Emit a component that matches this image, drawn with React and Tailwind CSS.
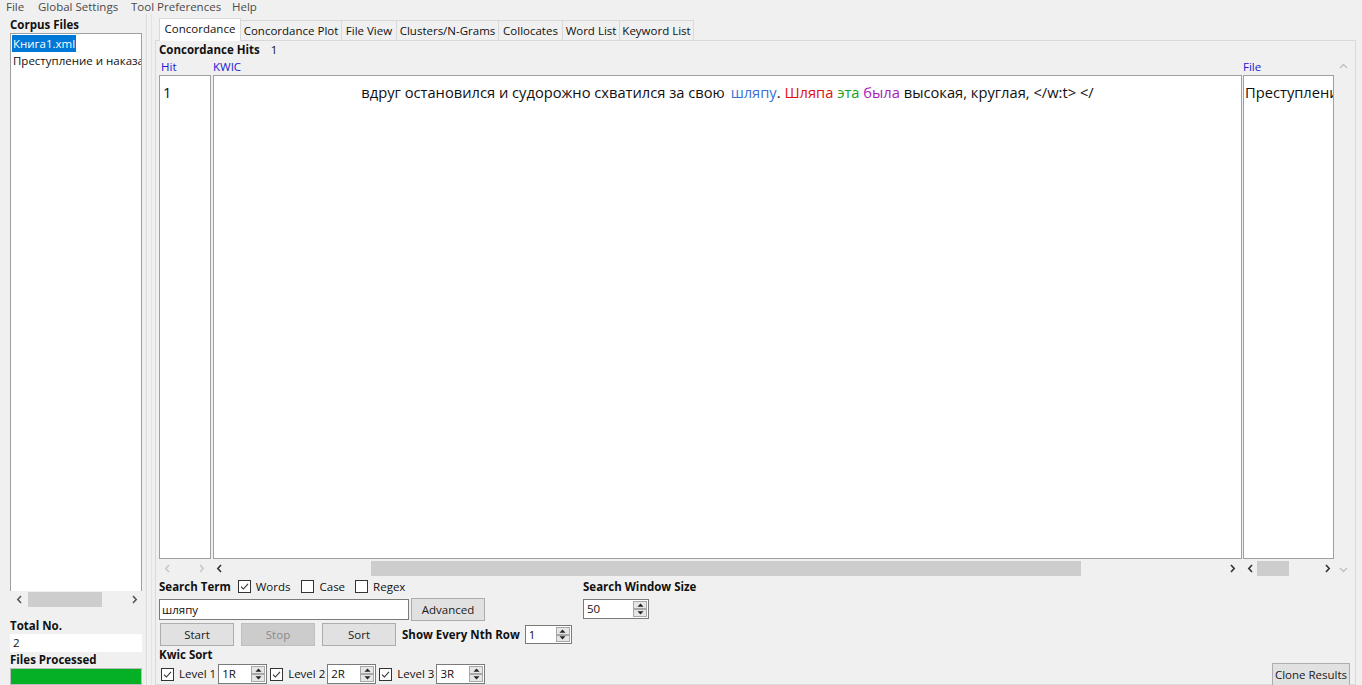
import React from "react";

const FONT = "font-['Open_Sans','Noto_Sans',sans-serif]";

function Check({ checked = true }) {
  return (
    <span className="w-[13px] h-[13px] border border-[#333333] bg-white flex items-center justify-center shrink-0">
      {checked && (
        <svg width="9" height="9" viewBox="0 0 9 9">
          <path d="M1 4.6 L3.4 7 L8 1.8" stroke="#333" strokeWidth="1.1" fill="none" />
        </svg>
      )}
    </span>
  );
}

function Tri({ up }) {
  return (
    <svg width="7" height="4" viewBox="0 0 7 4">
      {up ? <path d="M0.5 3.8 L3.5 0.5 L6.5 3.8 Z" fill="#222" /> : <path d="M0.5 0.2 L3.5 3.5 L6.5 0.2 Z" fill="#222" />}
    </svg>
  );
}

function Spin({ value, className }) {
  return (
    <div className={"flex border border-[#7a7a7a] bg-white shrink-0 " + className}>
      <div className="flex-1 pl-[3px] text-[11.5px] leading-[16px] flex items-center">{value}</div>
      <div className="w-[15px] flex flex-col justify-center gap-0 py-[1px] pr-[1px]">
        <div className="h-[8px] border border-[#a8a8a8] bg-[#e6e6e6] flex items-center justify-center">
          <Tri up />
        </div>
        <div className="h-[8px] border border-[#a8a8a8] bg-[#e6e6e6] flex items-center justify-center">
          <Tri />
        </div>
      </div>
    </div>
  );
}

function Chev({ dir, color = "#555" }) {
  return (
    <svg width="7" height="9" viewBox="0 0 7 9">
      {dir === "l" ? (
        <path d="M5 1 L1.8 4.5 L5 8" stroke={color} strokeWidth="1.6" fill="none" />
      ) : (
        <path d="M2 1 L5.2 4.5 L2 8" stroke={color} strokeWidth="1.6" fill="none" />
      )}
    </svg>
  );
}

function Btn({ children, className = "", disabled }) {
  return (
    <div
      className={
        "h-[23px] flex items-center justify-center border text-[11.5px] shrink-0 " +
        (disabled ? "bg-[#cccccc] border-[#bfbfbf] text-[#8a8a8a] " : "bg-[#e1e1e1] border-[#adadad] text-[#1a1a1a] ") +
        className
      }
    >
      {children}
    </div>
  );
}

const tabs = [
  ["Concordance Plot", "w-[101px]"],
  ["File View", "w-[55px]"],
  ["Clusters/N-Grams", "w-[102px]"],
  ["Collocates", "w-[64px]"],
  ["Word List", "w-[57px]"],
  ["Keyword List", "w-[74px]"],
];

export default function App() {
  return (
    <div className={"w-[1362px] h-[685px] bg-[#f0f0f0] overflow-hidden flex flex-col text-[#111] " + FONT}>
      {/* Menu bar */}
      <div className="h-[14px] flex items-start text-[11.5px] leading-[13px] text-[#4a4a4a] shrink-0">
        <div className="w-[38px] pl-[6px]">File</div>
        <div className="w-[93px]">Global Settings</div>
        <div className="w-[101px]">Tool Preferences</div>
        <div>Help</div>
      </div>

      <div className="flex flex-1 min-h-0">
        {/* Left panel */}
        <div className="w-[145px] pl-[10px] pr-[3px] flex flex-col shrink-0">
          <div className="h-[19px] shrink-0 text-[11.5px] font-bold leading-[16px] pt-[3px]">Corpus Files</div>
          <div className="h-[558px] shrink-0 border border-[#a0a0a0] border-b-0 bg-white flex flex-col text-[11.5px] leading-[17px] pt-[1px] pl-[1px] overflow-hidden">
            <div className="self-start bg-[#0078d7] text-white px-[1px]">Книга1.xml</div>
            <div className="whitespace-nowrap overflow-hidden px-[1px]">Преступление и наказание</div>
          </div>
          <div className="h-[17px] shrink-0 flex items-center bg-[#f0f0f0]">
            <div className="w-[18px] flex justify-center">
              <Chev dir="l" />
            </div>
            <div className="w-[74px] h-[15px] bg-[#cdcdcd]"></div>
            <div className="flex-1"></div>
            <div className="w-[16px] flex justify-center">
              <Chev dir="r" />
            </div>
          </div>
          <div className="h-[26px] shrink-0 text-[11.5px] font-bold leading-[16px] pt-[10px]">Total No.</div>
          <div className="h-[18px] shrink-0 bg-white text-[11.5px] leading-[18px] pl-[3px]">2</div>
          <div className="h-[16px] shrink-0 text-[11.5px] font-bold leading-[16px]">Files Processed</div>
          <div className="h-[17px] shrink-0 border border-[#bcbcbc] bg-[#06b025]"></div>
        </div>

        {/* Splitter */}
        <div className="w-[10px] flex shrink-0">
          <div className="w-[2px] ml-[1px] border-l border-[#dadada] bg-[#f5f5f5]"></div>
          <div className="w-[1px] ml-[3px] bg-[#e3e3e3]"></div>
        </div>

        {/* Right panel */}
        <div className="w-[1201px] flex flex-col shrink-0">
          {/* Tab bar */}
          <div className="h-[26px] flex items-end pl-[4px] text-[11.5px] shrink-0">
            <div className="w-[82px] h-[23px] bg-white border border-[#d9d9d9] border-b-0 flex items-center justify-center relative top-[1px] pb-[3px]">
              Concordance
            </div>
            {tabs.map(([t, w]) => (
              <div key={t} className={"h-[20px] border border-[#d9d9d9] border-l-0 border-b-0 bg-[#f0f0f0] flex items-center justify-center " + w}>
                {t}
              </div>
            ))}
          </div>

          {/* Pane */}
          <div className="flex-1 border border-[#d9d9d9] flex flex-col pl-[3px] pr-[3px] min-h-0">
            <div className="h-[17px] flex items-center text-[11.5px] shrink-0">
              <span className="font-bold">Concordance Hits</span>
              <span className="ml-[11px]">1</span>
            </div>

            {/* Table */}
            <div className="h-[518px] mt-[1px] flex shrink-0">
              {/* Hit col */}
              <div className="w-[52px] flex flex-col">
                <div className="h-[16px] text-[11.5px] leading-[15px] text-[#2020d0] pl-[2px]">Hit</div>
                <div className="flex-1 border border-[#a0a0a0] bg-white text-[14.7px] pl-[3px] pt-[6px] leading-[20px]">1</div>
                <div className="h-[18px] flex items-center pl-[5px] gap-[27px]">
                  <Chev dir="l" color="#c8c8c8" />
                  <Chev dir="r" color="#c8c8c8" />
                </div>
              </div>
              {/* KWIC col */}
              <div className="w-[1029px] ml-[2px] flex flex-col">
                <div className="h-[16px] text-[11.5px] leading-[15px] text-[#2020d0]">KWIC</div>
                <div className="flex-1 border border-[#a0a0a0] bg-white text-[14.7px] pt-[6px] leading-[20px] text-center whitespace-nowrap text-[#111]">
                  <span>вдруг остановился и судорожно схватился за свою </span>
                  <span className="ml-[2px] text-[#3a6fd8]">шляпу</span>
                  <span>. </span>
                  <span className="text-[#e01010]">Шляпа</span>
                  <span> </span>
                  <span className="text-[#18a018]">эта</span>
                  <span> </span>
                  <span className="text-[#a818b8]">была</span>
                  <span> высокая, круглая, &lt;/w:t&gt; &lt;/</span>
                </div>
                <div className="h-[18px] flex items-center">
                  <div className="w-[12px] flex justify-center">
                    <Chev dir="l" color="#333" />
                  </div>
                  <div className="w-[146px]"></div>
                  <div className="w-[710px] h-[15px] bg-[#cdcdcd]"></div>
                  <div className="flex-1"></div>
                  <div className="w-[20px] flex justify-center">
                    <Chev dir="r" color="#333" />
                  </div>
                </div>
              </div>
              {/* File col */}
              <div className="w-[91px] ml-[1px] flex flex-col">
                <div className="h-[16px] text-[11.5px] leading-[15px] text-[#2020d0]">File</div>
                <div className="flex-1 border border-[#a0a0a0] bg-white text-[14.7px] pl-[1px] pt-[6px] leading-[20px] whitespace-nowrap overflow-hidden">
                  Преступление
                </div>
                <div className="h-[18px] flex items-center">
                  <div className="w-[14px] flex justify-center">
                    <Chev dir="l" color="#333" />
                  </div>
                  <div className="w-[32px] h-[15px] bg-[#cdcdcd]"></div>
                  <div className="flex-1"></div>
                  <div className="w-[14px] flex justify-center">
                    <Chev dir="r" color="#333" />
                  </div>
                </div>
              </div>
              {/* Vertical scrollbar */}
              <div className="w-[17px] ml-[1px] flex flex-col items-center justify-between py-[4px]">
                <svg width="9" height="6" viewBox="0 0 9 6">
                  <path d="M1 5 L4.5 1.5 L8 5" stroke="#c0c0c0" strokeWidth="1.4" fill="none" />
                </svg>
                <svg width="9" height="6" viewBox="0 0 9 6">
                  <path d="M1 1 L4.5 4.5 L8 1" stroke="#c0c0c0" strokeWidth="1.4" fill="none" />
                </svg>
              </div>
            </div>

            {/* Controls */}
            <div className="flex-1 flex text-[11.5px] min-h-0">
              <div className="w-[424px] flex flex-col shrink-0">
                <div className="h-[17px] mt-[1px] flex items-center">
                  <span className="font-bold">Search Term</span>
                  <span className="ml-[7px]"><Check /></span>
                  <span className="ml-[5px]">Words</span>
                  <span className="ml-[10px]"><Check checked={false} /></span>
                  <span className="ml-[6px]">Case</span>
                  <span className="ml-[10px]"><Check checked={false} /></span>
                  <span className="ml-[5px]">Regex</span>
                </div>
                <div className="h-[23px] mt-[3px] flex items-center">
                  <div className="w-[250px] h-[21px] border border-[#7a7a7a] bg-white pl-[2px] flex items-center text-[11.5px]">шляпу</div>
                  <Btn className="w-[74px] ml-[2px]">Advanced</Btn>
                </div>
                <div className="h-[23px] mt-[2px] flex items-center pl-[1px]">
                  <Btn className="w-[74px]">Start</Btn>
                  <Btn className="w-[74px] ml-[7px]" disabled>Stop</Btn>
                  <Btn className="w-[74px] ml-[7px]">Sort</Btn>
                  <span className="ml-[6px] font-bold">Show Every Nth Row</span>
                  <Spin value="1" className="w-[47px] h-[19px] ml-[5px]" />
                </div>
                <div className="h-[16px] mt-[1px] font-bold leading-[16px]">Kwic Sort</div>
                <div className="h-[21px] mt-[1px] flex items-center pl-[2px]">
                  <Check />
                  <span className="ml-[5px]">Level 1</span>
                  <Spin value="1R" className="w-[49px] h-[20px] ml-[2px]" />
                  <span className="ml-[3px]"><Check /></span>
                  <span className="ml-[5px]">Level 2</span>
                  <Spin value="2R" className="w-[49px] h-[20px] ml-[2px]" />
                  <span className="ml-[3px]"><Check /></span>
                  <span className="ml-[5px]">Level 3</span>
                  <Spin value="3R" className="w-[49px] h-[20px] ml-[2px]" />
                </div>
              </div>
              <div className="flex flex-col">
                <div className="h-[17px] mt-[1px] flex items-center font-bold">Search Window Size</div>
                <Spin value="50" className="w-[66px] h-[20px] mt-[4px]" />
              </div>
              <div className="flex-1 flex items-end justify-end pr-[2px]">
                <Btn className="w-[78px] mb-[-2px]">Clone Results</Btn>
              </div>
            </div>
          </div>
        </div>
      </div>
    </div>
  );
}
